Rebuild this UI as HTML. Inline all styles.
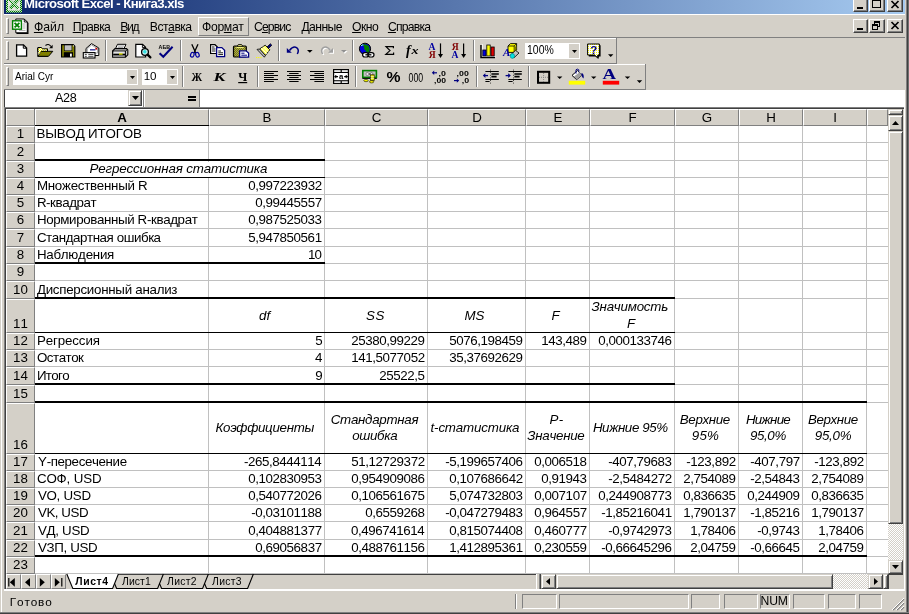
<!DOCTYPE html><html lang="ru"><head><meta charset="utf-8"><title>Microsoft Excel - Книга3.xls</title>
<style>
html,body{margin:0;padding:0;}
body{width:909px;height:614px;overflow:hidden;background:#d4d0c8;position:relative;
 font-family:"Liberation Sans",sans-serif;font-size:13.33px;color:#000;font-kerning:none;font-variant-ligatures:none;}
div{position:absolute;box-sizing:border-box;white-space:nowrap;}
svg{position:absolute;overflow:visible;}
.t{line-height:16px;height:16px;}
.ui{font-size:12.6px;line-height:16px;height:16px;}
.c{line-height:17px;height:17px;}
.r{text-align:right;}
.ctr{text-align:center;}
.i{font-style:italic;}
.b{font-weight:bold;}
.hl{background:#c0c0c0;height:1px;}
.vl{background:#c0c0c0;width:1px;}
.hdr{background:#d4d0c8;border-right:1px solid #808080;border-bottom:1px solid #808080;border-top:1px solid #fff;border-left:1px solid #fff;text-align:center;}
.btn{background:#d4d0c8;border:1px solid;border-color:#d4d0c8 #404040 #404040 #d4d0c8;box-shadow:inset 1px 1px 0 #fff,inset -1px -1px 0 #808080;}
.cb{background:#d4d0c8;border:1px solid;border-color:#fff #404040 #404040 #fff;box-shadow:inset -1px -1px 0 #808080;}
.sunk{border-top:1px solid #808080;border-left:1px solid #808080;border-right:1px solid #fff;border-bottom:1px solid #fff;}
.sep{width:2px;border-left:1px solid #808080;border-right:1px solid #fff;}
.grip{width:3px;border-left:1px solid #fff;border-right:1px solid #808080;border-top:1px solid #fff;border-bottom:1px solid #808080;}
.dither{background-image:conic-gradient(#fff 25%,#d4d0c8 0 50%,#fff 0 75%,#d4d0c8 0);background-size:2px 2px;}
</style></head><body><div id="w" style="left:0;top:0;width:909px;height:614px;will-change:transform;">
<div style="left:4px;top:0px;width:901px;height:14px;background:linear-gradient(to right,#0a246a 0%,#a6caf0 100%);"></div>
<div class="t" style="left:24.12px;top:-3.57px;font-size:13.2px;letter-spacing:-0.563px;font-weight:bold;color:#fff;">Microsoft Excel - Книга3.xls</div>
<svg style="left:0;top:0" width="30" height="14" viewBox="0 0 30 14"><defs><pattern id="dg" width="2" height="2" patternUnits="userSpaceOnUse"><rect width="2" height="2" fill="#008000"/><rect width="1" height="1" fill="#c0dcc0"/><rect x="1" y="1" width="1" height="1" fill="#c0dcc0"/></pattern></defs><rect x="6" y="-3" width="16" height="15.6" fill="url(#dg)"/><rect x="8" y="-3" width="12" height="13.6" fill="#e8e8e4"/><path d="M9.5 -1 L18 8.5 M18.5 -1 L10 8.5" stroke="url(#dg)" stroke-width="3.2"/><path d="M10 -1 L18.5 8.5" stroke="#fff" stroke-width="0.8"/></svg>
<div style="left:0;top:0;width:909px;height:12px;overflow:hidden;">
<div class="cb" style="left:853px;top:-3px;width:15px;height:15px;"></div>
<div style="left:857px;top:7px;width:6px;height:2px;background:#000;"></div>
<div class="cb" style="left:869px;top:-3px;width:16px;height:15px;"></div>
<div style="left:872px;top:-1px;width:9px;height:9px;border:1px solid #000;border-top:2px solid #000;"></div>
<div class="cb" style="left:887px;top:-3px;width:16px;height:15px;"></div>
<svg style="left:887px;top:-3px" width="16" height="15"><path d="M4.5 4 L11.5 11 M11.5 4 L4.5 11" stroke="#000" stroke-width="1.7" fill="none"/></svg>
</div>
<div style="left:4px;top:14px;width:901px;height:1px;background:#fff;"></div>
<div style="left:4px;top:37px;width:901px;height:1px;background:#808080;"></div>
<div style="left:4px;top:38px;width:612px;height:1px;background:#fff;"></div>
<div class="grip" style="left:6px;top:18px;width:3px;height:16px;"></div>
<svg style="left:0;top:0" width="40" height="40" viewBox="0 0 40 40"><path d="M16.5 20 H25.5 L28.5 23 V34 H16.5 Z" fill="#000"/><path d="M15.8 19 H24.3 L27.3 22 V32.8 H15.8 Z" fill="#fff" stroke="#000" stroke-width="1"/><path d="M24.3 19 V22 H27.3" fill="none" stroke="#000" stroke-width="0.9"/><path d="M22.5 24 H25.5 M22.5 26 H25.5 M22.5 28 H25.5 M19 30.4 H25.5" stroke="#a0a0a0" stroke-width="0.9"/><rect x="12.6" y="20.8" width="8.8" height="8.4" fill="#fff" stroke="#008000" stroke-width="1.4"/><path d="M14.6 22.8 L19.4 27.4 M19.4 22.8 L14.6 27.4" stroke="#008000" stroke-width="1.8"/></svg>
<div style="left:198px;top:17px;width:51px;height:19px;border-top:1px solid #fff;border-left:1px solid #fff;border-right:1px solid #808080;border-bottom:1px solid #808080;"></div>
<div class="t" style="left:33.90px;top:18.77px;font-size:12.2px;letter-spacing:0.085px;"><u>Ф</u>айл</div>
<div class="t" style="left:72.71px;top:18.77px;font-size:12.2px;letter-spacing:-0.571px;"><u>П</u>равка</div>
<div class="t" style="left:120.20px;top:18.77px;font-size:12.2px;letter-spacing:-1.331px;"><u>В</u>ид</div>
<div class="t" style="left:149.80px;top:18.77px;font-size:12.2px;letter-spacing:-0.502px;">Вст<u>а</u>вка</div>
<div class="t" style="left:202.10px;top:18.77px;font-size:12.2px;letter-spacing:-0.359px;">Фор<u>м</u>ат</div>
<div class="t" style="left:254.08px;top:18.77px;font-size:12.2px;letter-spacing:-0.907px;">С<u>е</u>рвис</div>
<div class="t" style="left:301.41px;top:18.77px;font-size:12.2px;letter-spacing:-0.589px;"><u>Д</u>анные</div>
<div class="t" style="left:352.12px;top:18.77px;font-size:12.2px;letter-spacing:-0.553px;"><u>О</u>кно</div>
<div class="t" style="left:387.88px;top:18.77px;font-size:12.2px;letter-spacing:-0.745px;"><u>С</u>правка</div>
<div class="cb" style="left:853px;top:19px;width:15px;height:14px;"></div>
<div style="left:857px;top:28px;width:6px;height:2px;background:#000;"></div>
<div class="cb" style="left:869px;top:19px;width:16px;height:14px;"></div>
<div style="left:874px;top:21px;width:6px;height:6px;border:1px solid #000;border-top:2px solid #000;"></div>
<div style="left:872px;top:24px;width:6px;height:6px;border:1px solid #000;border-top:2px solid #000;background:#d4d0c8;"></div>
<div class="cb" style="left:887px;top:19px;width:16px;height:14px;"></div>
<svg style="left:887px;top:19px" width="16" height="14"><path d="M4.5 3 L11.5 10 M11.5 3 L4.5 10" stroke="#000" stroke-width="1.7" fill="none"/></svg>
<div style="left:4px;top:63px;width:613px;height:1px;background:#808080;"></div>
<div style="left:4px;top:64px;width:642px;height:1px;background:#fff;"></div>
<div style="left:616px;top:38px;width:1px;height:26px;background:#808080;"></div>
<div class="grip" style="left:6px;top:41px;width:3px;height:19px;"></div>
<div class="sep" style="left:105px;top:40px;width:2px;height:21px;"></div>
<div class="sep" style="left:180px;top:40px;width:2px;height:21px;"></div>
<div class="sep" style="left:278px;top:40px;width:2px;height:21px;"></div>
<div class="sep" style="left:352px;top:40px;width:2px;height:21px;"></div>
<div class="sep" style="left:473px;top:40px;width:2px;height:21px;"></div>
<div style="left:525px;top:43px;width:55px;height:16px;background:#fff;"></div>
<div style="left:569px;top:44px;width:10px;height:14px;background:#d4d0c8;"></div>
<div class="t" style="left:526.80px;top:41.50px;font-size:12.4px;letter-spacing:0.000px;transform:scaleX(0.8441);transform-origin:0 0;">100%</div>
<div style="left:4px;top:89px;width:642px;height:1px;background:#808080;"></div>
<div style="left:645px;top:64px;width:1px;height:26px;background:#808080;"></div>
<div class="grip" style="left:6px;top:67px;width:3px;height:19px;"></div>
<div class="sep" style="left:182px;top:66px;width:2px;height:21px;"></div>
<div class="sep" style="left:257px;top:66px;width:2px;height:21px;"></div>
<div class="sep" style="left:355px;top:66px;width:2px;height:21px;"></div>
<div class="sep" style="left:476px;top:66px;width:2px;height:21px;"></div>
<div class="sep" style="left:528px;top:66px;width:2px;height:21px;"></div>
<div style="left:13px;top:69px;width:125px;height:16px;background:#fff;"></div>
<div class="t" style="left:14.88px;top:67.61px;font-size:11.8px;letter-spacing:0.000px;transform:scaleX(0.8486);transform-origin:0 0;">Arial Cyr</div>
<div style="left:127px;top:70px;width:10px;height:14px;background:#d4d0c8;"></div>
<div style="left:142px;top:69px;width:36px;height:16px;background:#fff;"></div>
<div class="t" style="left:143.82px;top:67.68px;font-size:11.6px;letter-spacing:-0.166px;">10</div>
<div style="left:167px;top:70px;width:10px;height:14px;background:#d4d0c8;"></div>
<svg style="left:129.5px;top:76px" width="5" height="3"><path d="M0 0 H5 L2.5 3 Z" fill="#000"/></svg>
<svg style="left:169.5px;top:76px" width="5" height="3"><path d="M0 0 H5 L2.5 3 Z" fill="#000"/></svg>
<svg style="left:571.5px;top:50px" width="5" height="3"><path d="M0 0 H5 L2.5 3 Z" fill="#000"/></svg>
<div style="left:4px;top:90px;width:1px;height:17px;background:#404040;"></div>
<div style="left:5px;top:90px;width:138px;height:17px;background:#fff;"></div>
<div class="t" style="left:54.98px;top:90.13px;font-size:12.6px;letter-spacing:-0.323px;">A28</div>
<div class="btn" style="left:128px;top:90px;width:14px;height:16px;"></div>
<svg style="left:131.5px;top:96px" width="7" height="4"><path d="M0 0 H7 L3.5 4 Z" fill="#000"/></svg>
<div style="left:143px;top:90px;width:57px;height:17px;border-left:1px solid #808080;border-right:1px solid #808080;box-shadow:inset 1px 0 0 #fff;"></div>
<div style="left:187.5px;top:96px;width:8px;height:1.5px;background:#000;"></div>
<div style="left:187.5px;top:99px;width:8px;height:1.5px;background:#000;"></div>
<div style="left:200px;top:90px;width:705px;height:17px;background:#fff;"></div>
<div style="left:4px;top:107px;width:901px;height:1px;background:#808080;"></div>
<div style="left:4px;top:107px;width:1px;height:484px;background:#808080;"></div>
<div style="left:5px;top:108px;width:900px;height:1px;background:#404040;"></div>
<div style="left:5px;top:108px;width:1px;height:482px;background:#404040;"></div>
<div style="left:6px;top:109px;width:882px;height:465px;background:#fff;"></div>
<div class="vl" style="left:208px;top:126px;width:1px;height:448px;"></div>
<div class="vl" style="left:324px;top:126px;width:1px;height:448px;"></div>
<div class="vl" style="left:427px;top:126px;width:1px;height:448px;"></div>
<div class="vl" style="left:525px;top:126px;width:1px;height:448px;"></div>
<div class="vl" style="left:589px;top:126px;width:1px;height:448px;"></div>
<div class="vl" style="left:674px;top:126px;width:1px;height:448px;"></div>
<div class="vl" style="left:738px;top:126px;width:1px;height:448px;"></div>
<div class="vl" style="left:802px;top:126px;width:1px;height:448px;"></div>
<div class="vl" style="left:866px;top:126px;width:1px;height:448px;"></div>
<div class="hl" style="left:35px;top:142px;width:853px;height:1px;"></div>
<div class="hl" style="left:35px;top:160px;width:853px;height:1px;"></div>
<div class="hl" style="left:35px;top:177px;width:853px;height:1px;"></div>
<div class="hl" style="left:35px;top:194px;width:853px;height:1px;"></div>
<div class="hl" style="left:35px;top:211px;width:853px;height:1px;"></div>
<div class="hl" style="left:35px;top:228px;width:853px;height:1px;"></div>
<div class="hl" style="left:35px;top:246px;width:853px;height:1px;"></div>
<div class="hl" style="left:35px;top:263px;width:853px;height:1px;"></div>
<div class="hl" style="left:35px;top:280px;width:853px;height:1px;"></div>
<div class="hl" style="left:35px;top:298px;width:853px;height:1px;"></div>
<div class="hl" style="left:35px;top:332px;width:853px;height:1px;"></div>
<div class="hl" style="left:35px;top:349px;width:853px;height:1px;"></div>
<div class="hl" style="left:35px;top:366px;width:853px;height:1px;"></div>
<div class="hl" style="left:35px;top:384px;width:853px;height:1px;"></div>
<div class="hl" style="left:35px;top:402px;width:853px;height:1px;"></div>
<div class="hl" style="left:35px;top:453px;width:853px;height:1px;"></div>
<div class="hl" style="left:35px;top:470px;width:853px;height:1px;"></div>
<div class="hl" style="left:35px;top:487px;width:853px;height:1px;"></div>
<div class="hl" style="left:35px;top:504px;width:853px;height:1px;"></div>
<div class="hl" style="left:35px;top:521px;width:853px;height:1px;"></div>
<div class="hl" style="left:35px;top:539px;width:853px;height:1px;"></div>
<div class="hl" style="left:35px;top:556px;width:853px;height:1px;"></div>
<div class="hl" style="left:35px;top:573px;width:853px;height:1px;"></div>
<div style="left:208px;top:162px;width:1px;height:15px;background:#fff;"></div>
<div class="hdr" style="left:6px;top:109px;width:29px;height:17px;"></div>
<div class="hdr" style="left:35px;top:109px;width:174px;height:17px;font-weight:bold;line-height:15px;">A</div>
<div class="hdr" style="left:209px;top:109px;width:116px;height:17px;line-height:15px;">B</div>
<div class="hdr" style="left:325px;top:109px;width:103px;height:17px;line-height:15px;">C</div>
<div class="hdr" style="left:428px;top:109px;width:98px;height:17px;line-height:15px;">D</div>
<div class="hdr" style="left:526px;top:109px;width:64px;height:17px;line-height:15px;">E</div>
<div class="hdr" style="left:590px;top:109px;width:85px;height:17px;line-height:15px;">F</div>
<div class="hdr" style="left:675px;top:109px;width:64px;height:17px;line-height:15px;">G</div>
<div class="hdr" style="left:739px;top:109px;width:64px;height:17px;line-height:15px;">H</div>
<div class="hdr" style="left:803px;top:109px;width:64px;height:17px;line-height:15px;">I</div>
<div class="hdr" style="left:867px;top:109px;width:21px;height:17px;"></div>
<div style="left:35px;top:125px;width:174px;height:1px;background:#000;"></div>
<div style="left:34px;top:109px;width:1px;height:17px;background:#808080;"></div>
<div class="hdr" style="left:6px;top:126px;width:29px;height:17px;"><div style="left:0;right:0;bottom:0.4px;height:17px;line-height:17px;text-align:center;">1</div></div>
<div class="hdr" style="left:6px;top:143px;width:29px;height:18px;"><div style="left:0;right:0;bottom:0.4px;height:17px;line-height:17px;text-align:center;">2</div></div>
<div class="hdr" style="left:6px;top:161px;width:29px;height:17px;"><div style="left:0;right:0;bottom:0.4px;height:17px;line-height:17px;text-align:center;">3</div></div>
<div class="hdr" style="left:6px;top:178px;width:29px;height:17px;"><div style="left:0;right:0;bottom:0.4px;height:17px;line-height:17px;text-align:center;">4</div></div>
<div class="hdr" style="left:6px;top:195px;width:29px;height:17px;"><div style="left:0;right:0;bottom:0.4px;height:17px;line-height:17px;text-align:center;">5</div></div>
<div class="hdr" style="left:6px;top:212px;width:29px;height:17px;"><div style="left:0;right:0;bottom:0.4px;height:17px;line-height:17px;text-align:center;">6</div></div>
<div class="hdr" style="left:6px;top:229px;width:29px;height:18px;"><div style="left:0;right:0;bottom:0.4px;height:17px;line-height:17px;text-align:center;">7</div></div>
<div class="hdr" style="left:6px;top:247px;width:29px;height:17px;"><div style="left:0;right:0;bottom:0.4px;height:17px;line-height:17px;text-align:center;">8</div></div>
<div class="hdr" style="left:6px;top:264px;width:29px;height:17px;"><div style="left:0;right:0;bottom:0.4px;height:17px;line-height:17px;text-align:center;">9</div></div>
<div class="hdr" style="left:6px;top:281px;width:29px;height:18px;"><div style="left:0;right:0;bottom:0.4px;height:17px;line-height:17px;text-align:center;">10</div></div>
<div class="hdr" style="left:6px;top:299px;width:29px;height:34px;"><div style="left:0;right:0;bottom:0.4px;height:17px;line-height:17px;text-align:center;">11</div></div>
<div class="hdr" style="left:6px;top:333px;width:29px;height:17px;"><div style="left:0;right:0;bottom:0.4px;height:17px;line-height:17px;text-align:center;">12</div></div>
<div class="hdr" style="left:6px;top:350px;width:29px;height:17px;"><div style="left:0;right:0;bottom:0.4px;height:17px;line-height:17px;text-align:center;">13</div></div>
<div class="hdr" style="left:6px;top:367px;width:29px;height:18px;"><div style="left:0;right:0;bottom:0.4px;height:17px;line-height:17px;text-align:center;">14</div></div>
<div class="hdr" style="left:6px;top:385px;width:29px;height:18px;"><div style="left:0;right:0;bottom:0.4px;height:17px;line-height:17px;text-align:center;">15</div></div>
<div class="hdr" style="left:6px;top:403px;width:29px;height:51px;"><div style="left:0;right:0;bottom:0.4px;height:17px;line-height:17px;text-align:center;">16</div></div>
<div class="hdr" style="left:6px;top:454px;width:29px;height:17px;"><div style="left:0;right:0;bottom:0.4px;height:17px;line-height:17px;text-align:center;">17</div></div>
<div class="hdr" style="left:6px;top:471px;width:29px;height:17px;"><div style="left:0;right:0;bottom:0.4px;height:17px;line-height:17px;text-align:center;">18</div></div>
<div class="hdr" style="left:6px;top:488px;width:29px;height:17px;"><div style="left:0;right:0;bottom:0.4px;height:17px;line-height:17px;text-align:center;">19</div></div>
<div class="hdr" style="left:6px;top:505px;width:29px;height:17px;"><div style="left:0;right:0;bottom:0.4px;height:17px;line-height:17px;text-align:center;">20</div></div>
<div class="hdr" style="left:6px;top:522px;width:29px;height:18px;"><div style="left:0;right:0;bottom:0.4px;height:17px;line-height:17px;text-align:center;">21</div></div>
<div class="hdr" style="left:6px;top:540px;width:29px;height:17px;"><div style="left:0;right:0;bottom:0.4px;height:17px;line-height:17px;text-align:center;">22</div></div>
<div class="hdr" style="left:6px;top:557px;width:29px;height:17px;"><div style="left:0;right:0;bottom:0.4px;height:17px;line-height:17px;text-align:center;">23</div></div>
<div class="c" style="left:36.51px;top:124.98px;letter-spacing:-0.178px;">ВЫВОД ИТОГОВ</div>
<div class="c" style="left:89.59px;top:159.98px;letter-spacing:-0.152px;font-style:italic;">Регрессионная статистика</div>
<div class="c" style="left:36.91px;top:176.98px;letter-spacing:-0.267px;">Множественный R</div>
<div class="c" style="left:248.27px;top:176.98px;letter-spacing:-0.404px;">0,997223932</div>
<div class="c" style="left:36.91px;top:193.98px;letter-spacing:-0.423px;">R-квадрат</div>
<div class="c" style="left:255.27px;top:193.98px;letter-spacing:-0.403px;">0,99445557</div>
<div class="c" style="left:36.91px;top:210.98px;letter-spacing:-0.365px;">Нормированный R-квадрат</div>
<div class="c" style="left:248.19px;top:210.98px;letter-spacing:-0.404px;">0,987525033</div>
<div class="c" style="left:36.92px;top:228.98px;letter-spacing:-0.428px;">Стандартная ошибка</div>
<div class="c" style="left:248.25px;top:228.98px;letter-spacing:-0.404px;">5,947850561</div>
<div class="c" style="left:36.91px;top:245.98px;letter-spacing:-0.250px;">Наблюдения</div>
<div class="c" style="left:308.12px;top:245.98px;letter-spacing:-1.027px;">10</div>
<div class="c" style="left:36.90px;top:280.98px;letter-spacing:-0.268px;">Дисперсионный анализ</div>
<div class="c" style="left:259.05px;top:306.58px;letter-spacing:-0.020px;font-style:italic;">df</div>
<div class="c" style="left:365.92px;top:306.58px;letter-spacing:0.739px;font-style:italic;">SS</div>
<div class="c" style="left:464.59px;top:306.58px;letter-spacing:-0.142px;font-style:italic;">MS</div>
<div class="c" style="left:551.59px;top:306.58px;letter-spacing:0.000px;font-style:italic;">F</div>
<div class="c" style="left:591.58px;top:298.18px;letter-spacing:-0.219px;font-style:italic;">Значимость</div>
<div class="c" style="left:626.89px;top:314.58px;letter-spacing:0.000px;font-style:italic;">F</div>
<div class="c" style="left:36.91px;top:331.98px;letter-spacing:-0.121px;">Регрессия</div>
<div class="c" style="left:315.16px;top:331.98px;letter-spacing:0.000px;">5</div>
<div class="c" style="left:351.23px;top:331.98px;letter-spacing:-0.404px;">25380,99229</div>
<div class="c" style="left:449.23px;top:331.98px;letter-spacing:-0.404px;">5076,198459</div>
<div class="c" style="left:541.23px;top:331.98px;letter-spacing:-0.397px;">143,489</div>
<div class="c" style="left:598.19px;top:331.98px;letter-spacing:-0.404px;">0,000133746</div>
<div class="c" style="left:36.97px;top:348.98px;letter-spacing:-0.489px;">Остаток</div>
<div class="c" style="left:314.99px;top:348.98px;letter-spacing:0.000px;">4</div>
<div class="c" style="left:351.27px;top:348.98px;letter-spacing:-0.404px;">141,5077052</div>
<div class="c" style="left:449.23px;top:348.98px;letter-spacing:-0.404px;">35,37692629</div>
<div class="c" style="left:36.91px;top:366.98px;letter-spacing:-0.681px;">Итого</div>
<div class="c" style="left:315.23px;top:366.98px;letter-spacing:0.000px;">9</div>
<div class="c" style="left:379.16px;top:366.98px;letter-spacing:-0.397px;">25522,5</div>
<div class="c" style="left:215.49px;top:419.18px;letter-spacing:-0.312px;font-style:italic;">Коэффициенты</div>
<div class="c" style="left:330.76px;top:410.78px;letter-spacing:-0.285px;font-style:italic;">Стандартная</div>
<div class="c" style="left:352.16px;top:427.18px;letter-spacing:-0.321px;font-style:italic;">ошибка</div>
<div class="c" style="left:430.59px;top:419.18px;letter-spacing:-0.170px;font-style:italic;">t-статистика</div>
<div class="c" style="left:549.39px;top:410.78px;letter-spacing:0.579px;font-style:italic;">P-</div>
<div class="c" style="left:527.28px;top:427.18px;letter-spacing:-0.270px;font-style:italic;">Значение</div>
<div class="c" style="left:592.89px;top:419.18px;letter-spacing:-0.386px;font-style:italic;">Нижние 95%</div>
<div class="c" style="left:679.79px;top:410.78px;letter-spacing:-0.340px;font-style:italic;">Верхние</div>
<div class="c" style="left:691.84px;top:427.18px;letter-spacing:0.224px;font-style:italic;">95%</div>
<div class="c" style="left:745.89px;top:410.78px;letter-spacing:-0.694px;font-style:italic;">Нижние</div>
<div class="c" style="left:749.94px;top:427.18px;letter-spacing:-0.367px;font-style:italic;">95,0%</div>
<div class="c" style="left:808.09px;top:410.78px;letter-spacing:-0.423px;font-style:italic;">Верхние</div>
<div class="c" style="left:814.84px;top:427.18px;letter-spacing:-0.267px;font-style:italic;">95,0%</div>
<div class="c" style="left:38.11px;top:452.98px;letter-spacing:-0.372px;">Y-пересечение</div>
<div class="c" style="left:243.99px;top:452.98px;letter-spacing:-0.407px;">-265,8444114</div>
<div class="c" style="left:351.27px;top:452.98px;letter-spacing:-0.404px;">51,12729372</div>
<div class="c" style="left:445.19px;top:452.98px;letter-spacing:-0.407px;">-5,199657406</div>
<div class="c" style="left:534.18px;top:452.98px;letter-spacing:-0.400px;">0,006518</div>
<div class="c" style="left:608.19px;top:452.98px;letter-spacing:-0.406px;">-407,79683</div>
<div class="c" style="left:686.27px;top:452.98px;letter-spacing:-0.403px;">-123,892</div>
<div class="c" style="left:750.27px;top:452.98px;letter-spacing:-0.403px;">-407,797</div>
<div class="c" style="left:814.27px;top:452.98px;letter-spacing:-0.403px;">-123,892</div>
<div class="c" style="left:36.92px;top:469.98px;letter-spacing:-0.138px;">СОФ, USD</div>
<div class="c" style="left:248.19px;top:469.98px;letter-spacing:-0.404px;">0,102830953</div>
<div class="c" style="left:351.19px;top:469.98px;letter-spacing:-0.404px;">0,954909086</div>
<div class="c" style="left:449.27px;top:469.98px;letter-spacing:-0.404px;">0,107686642</div>
<div class="c" style="left:541.19px;top:469.98px;letter-spacing:-0.397px;">0,91943</div>
<div class="c" style="left:608.27px;top:469.98px;letter-spacing:-0.406px;">-2,5484272</div>
<div class="c" style="left:683.23px;top:469.98px;letter-spacing:-0.400px;">2,754089</div>
<div class="c" style="left:750.19px;top:469.98px;letter-spacing:-0.403px;">-2,54843</div>
<div class="c" style="left:811.23px;top:469.98px;letter-spacing:-0.400px;">2,754089</div>
<div class="c" style="left:37.94px;top:486.98px;letter-spacing:-0.286px;">VO, USD</div>
<div class="c" style="left:248.19px;top:486.98px;letter-spacing:-0.404px;">0,540772026</div>
<div class="c" style="left:351.16px;top:486.98px;letter-spacing:-0.404px;">0,106561675</div>
<div class="c" style="left:449.19px;top:486.98px;letter-spacing:-0.404px;">5,074732803</div>
<div class="c" style="left:534.27px;top:486.98px;letter-spacing:-0.400px;">0,007107</div>
<div class="c" style="left:598.19px;top:486.98px;letter-spacing:-0.404px;">0,244908773</div>
<div class="c" style="left:683.16px;top:486.98px;letter-spacing:-0.400px;">0,836635</div>
<div class="c" style="left:747.23px;top:486.98px;letter-spacing:-0.400px;">0,244909</div>
<div class="c" style="left:811.16px;top:486.98px;letter-spacing:-0.400px;">0,836635</div>
<div class="c" style="left:37.94px;top:503.98px;letter-spacing:-0.439px;">VK, USD</div>
<div class="c" style="left:251.18px;top:503.98px;letter-spacing:-0.406px;">-0,03101188</div>
<div class="c" style="left:365.18px;top:503.98px;letter-spacing:-0.401px;">0,6559268</div>
<div class="c" style="left:445.19px;top:503.98px;letter-spacing:-0.407px;">-0,047279483</div>
<div class="c" style="left:534.27px;top:503.98px;letter-spacing:-0.400px;">0,964557</div>
<div class="c" style="left:601.25px;top:503.98px;letter-spacing:-0.406px;">-1,85216041</div>
<div class="c" style="left:683.27px;top:503.98px;letter-spacing:-0.400px;">1,790137</div>
<div class="c" style="left:750.19px;top:503.98px;letter-spacing:-0.403px;">-1,85216</div>
<div class="c" style="left:811.27px;top:503.98px;letter-spacing:-0.400px;">1,790137</div>
<div class="c" style="left:37.94px;top:521.98px;letter-spacing:-0.296px;">VД, USD</div>
<div class="c" style="left:248.27px;top:521.98px;letter-spacing:-0.404px;">0,404881377</div>
<div class="c" style="left:350.99px;top:521.98px;letter-spacing:-0.404px;">0,496741614</div>
<div class="c" style="left:449.18px;top:521.98px;letter-spacing:-0.404px;">0,815074408</div>
<div class="c" style="left:534.27px;top:521.98px;letter-spacing:-0.400px;">0,460777</div>
<div class="c" style="left:608.19px;top:521.98px;letter-spacing:-0.406px;">-0,9742973</div>
<div class="c" style="left:690.19px;top:521.98px;letter-spacing:-0.397px;">1,78406</div>
<div class="c" style="left:757.19px;top:521.98px;letter-spacing:-0.402px;">-0,9743</div>
<div class="c" style="left:818.19px;top:521.98px;letter-spacing:-0.397px;">1,78406</div>
<div class="c" style="left:37.94px;top:538.98px;letter-spacing:-0.340px;">VЗП, USD</div>
<div class="c" style="left:255.27px;top:538.98px;letter-spacing:-0.403px;">0,69056837</div>
<div class="c" style="left:351.19px;top:538.98px;letter-spacing:-0.404px;">0,488761156</div>
<div class="c" style="left:449.25px;top:538.98px;letter-spacing:-0.404px;">1,412895361</div>
<div class="c" style="left:534.23px;top:538.98px;letter-spacing:-0.400px;">0,230559</div>
<div class="c" style="left:601.19px;top:538.98px;letter-spacing:-0.406px;">-0,66645296</div>
<div class="c" style="left:690.23px;top:538.98px;letter-spacing:-0.397px;">2,04759</div>
<div class="c" style="left:750.16px;top:538.98px;letter-spacing:-0.403px;">-0,66645</div>
<div class="c" style="left:818.23px;top:538.98px;letter-spacing:-0.397px;">2,04759</div>
<div style="left:35px;top:159px;width:290px;height:2px;background:#000;"></div>
<div style="left:35px;top:177px;width:290px;height:1px;background:#000;"></div>
<div style="left:35px;top:262px;width:290px;height:2px;background:#000;"></div>
<div style="left:35px;top:297px;width:640px;height:2px;background:#000;"></div>
<div style="left:35px;top:332px;width:640px;height:1px;background:#000;"></div>
<div style="left:35px;top:383px;width:640px;height:2px;background:#000;"></div>
<div style="left:35px;top:401px;width:832px;height:2px;background:#000;"></div>
<div style="left:35px;top:453px;width:832px;height:1px;background:#000;"></div>
<div style="left:35px;top:555px;width:832px;height:2px;background:#000;"></div>
<div class="dither" style="left:888px;top:109px;width:15px;height:465px;"></div>
<div class="btn" style="left:888px;top:109px;width:15px;height:6px;"></div>
<div class="btn" style="left:888px;top:115px;width:15px;height:16px;"></div>
<svg style="left:892px;top:121px" width="7" height="4"><path d="M0 4 H7 L3.5 0 Z" fill="#000"/></svg>
<div class="btn" style="left:888px;top:131px;width:15px;height:393px;"></div>
<div class="btn" style="left:888px;top:560px;width:15px;height:14px;"></div>
<svg style="left:892px;top:565px" width="7" height="4"><path d="M0 0 H7 L3.5 4 Z" fill="#000"/></svg>
<div style="left:904px;top:107px;width:1px;height:484px;background:#fff;"></div>
<div style="left:6px;top:574px;width:530px;height:15px;background:#d4d0c8;"></div>
<div style="left:118px;top:574px;width:418px;height:1px;background:#404040;"></div>
<div style="left:6px;top:574px;width:15px;height:15px;background:#d4d0c8;border:1px solid;border-color:#fff #808080 #808080 #fff;"></div>
<div style="left:21px;top:574px;width:15px;height:15px;background:#d4d0c8;border:1px solid;border-color:#fff #808080 #808080 #fff;"></div>
<div style="left:36px;top:574px;width:15px;height:15px;background:#d4d0c8;border:1px solid;border-color:#fff #808080 #808080 #fff;"></div>
<div style="left:51px;top:574px;width:15px;height:15px;background:#d4d0c8;border:1px solid;border-color:#fff #808080 #808080 #fff;"></div>
<svg style="left:6px;top:574px" width="60" height="15"><path d="M2.8 4 V12.6" stroke="#000" stroke-width="1.2"/><path d="M8.8 3.9 V12.7 L3.8 8.3 Z" fill="#000"/><path d="M24 3.9 V12.7 L19 8.3 Z" fill="#000"/><path d="M33.8 3.9 V12.7 L38.8 8.3 Z" fill="#000"/><path d="M48.8 3.9 V12.7 L53.8 8.3 Z" fill="#000"/><path d="M55.8 4 V12.6" stroke="#000" stroke-width="1.2"/></svg>
<svg style="left:0;top:0" width="300" height="600"><path d="M66.8 574 L72.8 588.5 H112.6 L118.4 574 Z" fill="#fff"/><path d="M66.8 574 L72.8 588.5 H112.6 L118.4 574" fill="none" stroke="#000" stroke-width="1.1"/><path d="M114.6 583.6 L116.6 588.5 H157.6 L163.4 574 M159.6 583.6 L161.6 588.5 H202.6 L208.4 574 M204.6 583.6 L206.6 588.5 H247.6 L253.4 574 " fill="none" stroke="#000" stroke-width="1.1"/></svg>
<div class="t" style="left:75.36px;top:573.60px;font-size:10.4px;letter-spacing:0.561px;font-weight:bold;">Лист4</div>
<div class="t" style="left:122.11px;top:573.60px;font-size:10.4px;letter-spacing:0.054px;">Лист1</div>
<div class="t" style="left:167.11px;top:573.60px;font-size:10.4px;letter-spacing:0.258px;">Лист2</div>
<div class="t" style="left:212.11px;top:573.60px;font-size:10.4px;letter-spacing:0.242px;">Лист3</div>
<div style="left:536px;top:574px;width:5px;height:15px;border-left:1px solid #fff;border-right:1px solid #404040;box-shadow:inset -1px 0 0 #808080;"></div>
<div class="dither" style="left:541px;top:574px;width:347px;height:15px;"></div>
<div class="btn" style="left:541px;top:574px;width:15px;height:15px;"></div>
<svg style="left:546px;top:578px" width="4" height="7"><path d="M4 0 V7 L0 3.5 Z" fill="#000"/></svg>
<div class="btn" style="left:556px;top:574px;width:277px;height:15px;"></div>
<div class="btn" style="left:868px;top:574px;width:15px;height:15px;"></div>
<svg style="left:874px;top:578px" width="4" height="7"><path d="M0 0 V7 L4 3.5 Z" fill="#000"/></svg>
<div class="btn" style="left:883px;top:574px;width:5px;height:15px;"></div>
<div style="left:888px;top:574px;width:15px;height:15px;background:#d4d0c8;border-left:1px solid #404040;border-top:1px solid #404040;"></div>
<div style="left:4px;top:589.4px;width:901px;height:1.6px;background:#fff;"></div>
<div class="t" style="left:9.73px;top:593.71px;font-size:11.8px;letter-spacing:0.863px;">Готово</div>
<div class="sep" style="left:515px;top:594px;width:2px;height:15px;"></div>
<div class="sunk" style="left:522px;top:594px;width:34.5px;height:15px;"></div>
<div class="sunk" style="left:559px;top:594px;width:130px;height:15px;"></div>
<div class="sunk" style="left:691px;top:594px;width:29px;height:15px;"></div>
<div class="sunk" style="left:724px;top:594px;width:33.5px;height:15px;"></div>
<div class="sunk" style="left:760px;top:594px;width:30px;height:15px;"></div>
<div class="sunk" style="left:793px;top:594px;width:32px;height:15px;"></div>
<div class="sunk" style="left:828px;top:594px;width:28px;height:15px;"></div>
<div class="sunk" style="left:859px;top:594px;width:23px;height:15px;"></div>
<div class="t" style="left:760.50px;top:593.47px;font-size:12.2px;letter-spacing:-0.141px;">NUM</div>
<svg style="left:892px;top:598px" width="13" height="13"><path d="M12 1 L1 12 M12 5 L5 12 M12 9 L9 12" stroke="#808080" stroke-width="1.3"/><path d="M12 0 L0 12 M12 4 L4 12 M12 8 L8 12" stroke="#fff" stroke-width="1"/></svg>
<div style="left:1px;top:0px;width:1px;height:612px;background:#fff;"></div>
<div style="left:905px;top:0px;width:1px;height:614px;background:#d4d0c8;"></div>
<div style="left:906px;top:0px;width:1px;height:614px;background:#808080;"></div>
<div style="left:907px;top:0px;width:1px;height:614px;background:#404040;"></div>
<div style="left:908px;top:0px;width:1px;height:614px;background:#707070;"></div>
<div style="left:0px;top:612px;width:909px;height:1px;background:#808080;"></div>
<div style="left:0px;top:613px;width:909px;height:1px;background:#404040;"></div>
<svg style="left:0;top:0" width="909" height="92" viewBox="0 0 909 92" font-family="Liberation Sans, sans-serif" style="font-kerning:none">
<defs>
<pattern id="dy" width="2" height="2" patternUnits="userSpaceOnUse"><rect width="2" height="2" fill="#ffff00"/><rect width="1" height="1" fill="#fff"/><rect x="1" y="1" width="1" height="1" fill="#fff"/></pattern>
<pattern id="do" width="2" height="2" patternUnits="userSpaceOnUse"><rect width="2" height="2" fill="#808000"/><rect width="1" height="1" fill="#a0a060"/><rect x="1" y="1" width="1" height="1" fill="#a0a060"/></pattern>
<pattern id="dh" width="2" height="2" patternUnits="userSpaceOnUse"><rect width="2" height="2" fill="#fff"/><rect width="1" height="1" fill="#ffff00"/></pattern>
</defs>
<!-- ===== Toolbar 1 ===== -->
<!-- New -->
<path d="M16.6 44.8 H23.5 L26.6 48 V56.2 H16.6 Z" fill="#fff" stroke="#000" stroke-width="1.3"/>
<path d="M23.3 44.8 V48.2 H26.6" fill="none" stroke="#000" stroke-width="1"/>
<!-- Open -->
<path d="M37.8 47.5 H41.5 L42.5 48.8 H47.5 V51.5 H37.8 Z" fill="url(#dy)" stroke="#000" stroke-width="1"/>
<path d="M37.8 48 V56.3 H47.8" fill="none" stroke="#000" stroke-width="1"/>
<path d="M37.8 56.3 L41 51.3 H52.8 L48.5 56.3 Z" fill="#808000" stroke="#000" stroke-width="1"/>
<path d="M38.6 48.6 L41.2 51 L38.6 55 Z" fill="url(#dy)"/>
<path d="M45.5 45.5 Q48.5 43 51 46.5" fill="none" stroke="#000" stroke-width="1.1"/>
<path d="M52.6 44.8 V48.3 H49.2 Z" fill="#000"/>
<!-- Save -->
<path d="M61.6 44.6 H73.2 L74.8 46.2 V57 H61.6 Z" fill="#808000" stroke="#000" stroke-width="1.2"/>
<rect x="64.3" y="45" width="7.6" height="5.8" fill="#c0c0c0" stroke="#000" stroke-width="0.6"/>
<rect x="63.8" y="52.2" width="9.2" height="4.8" fill="#000"/>
<rect x="70" y="53.6" width="1.8" height="3" fill="#fff"/>
<rect x="73" y="45.4" width="1" height="1" fill="#fff"/>
<!-- Mail -->
<path d="M86 48.5 L91.5 43.6 L98.8 48 V55.5 H86 Z" fill="#fff" stroke="#000" stroke-width="1"/>
<path d="M87.3 48.8 L91.5 45 L97.6 48.6 V53 H87.3 Z" fill="#fff" stroke="#808080" stroke-width="0.7"/>
<rect x="90" y="49.3" width="5.5" height="1.1" fill="#000080"/>
<rect x="95.4" y="47.8" width="1.8" height="1.8" fill="#c00000"/>
<rect x="83.3" y="52.6" width="11.7" height="5.4" fill="#fff" stroke="#000" stroke-width="1.1"/>
<path d="M84.8 54.4 H86.8 M84.8 56.3 H86.8 M88.3 54.4 H93.5 M88.3 56.3 H93.5" stroke="#404040" stroke-width="1"/>
<!-- Print -->
<path d="M115.5 48.6 L117.5 44.3 H126 L124 48.6 Z" fill="#fff" stroke="#000" stroke-width="1"/>
<path d="M118 46 H124 M117.5 47.4 H123.3" stroke="#808080" stroke-width="0.7"/>
<path d="M112.6 51 L115 48.6 H126.5 L127.8 50 V54.8 L125.4 57.2 H112.6 Z" fill="#c0c0c0" stroke="#000" stroke-width="1.1"/>
<path d="M112.6 51 H125.4 V57.2 M125.4 51 L127.6 49.4" fill="none" stroke="#000" stroke-width="1"/>
<path d="M113.2 54.6 H125" stroke="#000" stroke-width="1.6"/>
<rect x="119" y="53.4" width="3.6" height="1.2" fill="#ffff00"/>
<path d="M114 52.2 H124.6" stroke="#fff" stroke-width="0.8"/>
<!-- Preview -->
<path d="M135.8 44.3 H142.6 L145.6 47.3 V57 H135.8 Z" fill="#fff" stroke="#000" stroke-width="1.2"/>
<path d="M142.4 44.3 V47.5 H145.6" fill="none" stroke="#000" stroke-width="0.9"/>
<circle cx="145" cy="52" r="3.4" fill="#c8f0f0" stroke="#000" stroke-width="1.3"/>
<circle cx="144.8" cy="51.8" r="1.7" fill="#30e0e0"/>
<path d="M147.5 54.6 L150.4 57.4" stroke="#000" stroke-width="2.2" stroke-linecap="round"/>
<!-- Spell -->
<text x="158.6" y="48.6" font-size="5.6" font-weight="bold" fill="#000" textLength="11.5" lengthAdjust="spacingAndGlyphs">АБВ</text>
<path d="M159.6 53.2 L163.3 56.8 L172.6 46.8" fill="none" stroke="#000080" stroke-width="2"/>
<!-- Cut -->
<path d="M191.8 44.3 L195.8 53 M198 44.3 L194 53" stroke="#000" stroke-width="1.3" fill="none"/>
<ellipse cx="192.3" cy="54.8" rx="1.7" ry="2.4" fill="none" stroke="#0000a0" stroke-width="1.2" transform="rotate(20 192.3 54.8)"/>
<ellipse cx="197.4" cy="54.8" rx="1.7" ry="2.4" fill="none" stroke="#0000a0" stroke-width="1.2" transform="rotate(-20 197.4 54.8)"/>
<!-- Copy -->
<path d="M210.6 44.7 H215 L217.4 47 V53.5 H210.6 Z" fill="#fff" stroke="#000" stroke-width="1.2"/>
<path d="M212 47 H214.5 M212 49 H215.5 M212 51 H215.5" stroke="#000" stroke-width="0.9"/>
<path d="M216.6 47.6 H221.8 L224.6 50.3 V56.6 H216.6 Z" fill="#fff" stroke="#000080" stroke-width="1.3"/>
<path d="M218.3 51 H221 M218.3 52.8 H223 M218.3 54.6 H223" stroke="#000" stroke-width="0.9"/>
<!-- Paste -->
<rect x="233.5" y="46" width="12.8" height="11" rx="1" fill="url(#do)" stroke="#000" stroke-width="1.2"/>
<path d="M237 46.6 L238.3 44.6 H241.6 L243 46.6 Z" fill="#e0e080" stroke="#000" stroke-width="0.9"/>
<path d="M236.4 47.4 H243.6" stroke="#ffff80" stroke-width="1"/>
<path d="M239.6 50.8 H246 L248.6 53 V57.2 H239.6 Z" fill="#fff" stroke="#000080" stroke-width="1.3"/>
<path d="M241.3 53.2 H244.5 M241.3 55.2 H247" stroke="#000080" stroke-width="1"/>
<!-- Format painter -->
<path d="M267.2 46.8 L270.4 43.8 L271.8 45.2 L268.8 48.3 Z" fill="#000080" stroke="#000" stroke-width="0.8"/>
<path d="M259.5 49 L265.2 45.2 L269.8 49.8 L265.4 55.4 Z" fill="#ffff60" stroke="#000" stroke-width="0.9"/>
<path d="M261.2 48 L266.8 53.8 M263.2 46.6 L268.4 52" stroke="#fff" stroke-width="0.9"/>
<path d="M257 49.4 L259.5 49 L265.4 55.4 L264.4 57.2 Z" fill="#c0c0c0" stroke="#000" stroke-width="0.8"/>
<path d="M256 57.6 H261.5" stroke="#ffff00" stroke-width="1" stroke-dasharray="1.3 0.8"/>
<!-- Undo -->
<path d="M286.8 48 V52.8 H291.8 Z" fill="#000080"/>
<path d="M289.5 50.5 Q293 45.8 296.6 47.6 Q299.6 50 297.3 54" fill="none" stroke="#000080" stroke-width="1.5"/>
<path d="M307 50 H312.6 L309.8 52.8 Z" fill="#000"/>
<!-- Redo (disabled) -->
<g transform="translate(1,1)"><path d="M333 48 V52.8 H328 Z" fill="#fff"/><path d="M330.4 50.5 Q327 45.8 323.3 47.6 Q320.3 50 322.6 54" fill="none" stroke="#fff" stroke-width="1.5"/></g>
<path d="M333 48 V52.8 H328 Z" fill="#a0a0a0"/><path d="M330.4 50.5 Q327 45.8 323.3 47.6 Q320.3 50 322.6 54" fill="none" stroke="#a0a0a0" stroke-width="1.5"/>
<path d="M342 51 H347.6 L344.8 53.8 Z" fill="#fff"/>
<path d="M341 50 H346.6 L343.8 52.8 Z" fill="#909090"/>
<!-- Globe / hyperlink -->
<circle cx="365" cy="48.8" r="5.6" fill="#0000e0" stroke="#000" stroke-width="1"/>
<path d="M362.5 44.6 Q366 43.6 368.8 46 Q370.6 49 369 52.4 Q366.5 52.8 365.4 50.6 Q363.4 49.6 364.2 47.2 Z" fill="#008000"/>
<path d="M361 46 Q362 44.6 363.4 45" stroke="#80ffff" stroke-width="1" fill="none"/>
<rect x="362.6" y="52.6" width="6" height="4.4" rx="2.2" fill="#fff" stroke="#000" stroke-width="1.2"/>
<rect x="368" y="52.6" width="6" height="4.4" rx="2.2" fill="#fff" stroke="#000" stroke-width="1.2"/>
<path d="M365.4 54.8 H371.4" stroke="#000" stroke-width="1.3"/>
<!-- Sigma -->
<path d="M393.4 48.2 V46.6 H386 L390 50.6 L385.8 54.4 H393.6 V52.6" fill="none" stroke="#000" stroke-width="1.2"/>
<!-- fx -->
<text x="406" y="55" font-family="Liberation Serif, serif" font-style="italic" font-weight="bold" font-size="14" fill="#000">f</text>
<text x="411.6" y="54" font-family="Liberation Serif, serif" font-style="italic" font-weight="bold" font-size="9.4" fill="#000" textLength="7" lengthAdjust="spacingAndGlyphs">x</text>
<!-- Sort asc -->
<text x="428.6" y="50" font-family="Liberation Serif, serif" font-weight="bold" font-size="9.6" fill="#0000a0">А</text>
<text x="428.8" y="57.6" font-family="Liberation Serif, serif" font-weight="bold" font-size="9.6" fill="#800000">Я</text>
<path d="M440.5 43.4 V55" stroke="#000" stroke-width="1.2"/><path d="M438 54 H443 L440.5 58 Z" fill="#000"/>
<!-- Sort desc -->
<text x="451.8" y="50" font-family="Liberation Serif, serif" font-weight="bold" font-size="9.6" fill="#800000">Я</text>
<text x="451.6" y="57.6" font-family="Liberation Serif, serif" font-weight="bold" font-size="9.6" fill="#0000a0">А</text>
<path d="M463.6 43.4 V55" stroke="#000" stroke-width="1.2"/><path d="M461.1 54 H466.1 L463.6 58 Z" fill="#000"/>
<!-- Chart -->
<path d="M481 45 V57.6 H495" fill="none" stroke="#000" stroke-width="1.5"/>
<path d="M482.4 44 V56.4 H495.6" fill="none" stroke="#fff" stroke-width="0.8"/>
<rect x="482.8" y="50" width="3.2" height="6" fill="#0000e0" stroke="#000" stroke-width="0.8"/>
<rect x="486.8" y="45" width="3.4" height="11" fill="#ffff00" stroke="#000" stroke-width="0.8"/>
<rect x="491" y="47" width="3.2" height="9" fill="#e00000" stroke="#000" stroke-width="0.8"/>
<!-- Drawing -->
<path d="M508 46 L510.5 43.6 H516.6 V50 L514.2 52.4 H508 Z" fill="#ffff00" stroke="#000" stroke-width="0.9"/>
<path d="M508 46 H514.2 V52.4 M514.2 46 L516.6 43.6" fill="none" stroke="#000" stroke-width="0.8"/>
<rect x="514.4" y="46.4" width="2" height="5" fill="#808000"/>
<text x="503" y="55.6" font-family="Liberation Serif, serif" font-weight="bold" font-style="italic" font-size="11" fill="#0000a0">A</text>
<path d="M510.5 55 L515.5 50.4 L519 53 L514 57.8 Z" fill="#c0c0c0" stroke="#000" stroke-width="0.8"/>
<ellipse cx="512.4" cy="56" rx="2.2" ry="2.4" fill="#00e0e0" stroke="#008080" stroke-width="0.6"/>
<!-- Help -->
<path d="M588.8 45.2 H600.6 V56.4 H599 L598.4 59 L595.6 56.4 H588.8 Z" fill="#000"/>
<path d="M587.6 44 H599.4 V55 H597.8 L597.6 57.8 L594.6 55 H587.6 Z" fill="url(#dh)" stroke="#000" stroke-width="1"/>
<text x="590.3" y="53.6" font-weight="bold" font-size="11.5" fill="#000080">?</text>
<path d="M608 54.2 H613.4 L610.7 57 Z" fill="#000"/>
<!-- ===== Toolbar 2 ===== -->
<text x="191.6" y="81" font-family="Liberation Serif, serif" font-weight="bold" font-size="13.4" fill="#000" textLength="10.6" lengthAdjust="spacingAndGlyphs">Ж</text>
<text x="213.4" y="81" font-family="Liberation Serif, serif" font-weight="bold" font-style="italic" font-size="13.4" fill="#000" textLength="12" lengthAdjust="spacingAndGlyphs">К</text>
<text x="238.2" y="81" font-family="Liberation Serif, serif" font-weight="bold" font-size="13.4" fill="#000" textLength="9" lengthAdjust="spacingAndGlyphs">Ч</text>
<rect x="238.2" y="82" width="9" height="1.2" fill="#000"/>
<!-- align left -->
<path d="M264 71.5 H278 M264 73.5 H273.8 M264 75.5 H278 M264 77.5 H273.8 M264 79.5 H278 M264 81.5 H273.8" stroke="#000" stroke-width="1.1"/>
<path d="M287 71.5 H301 M289.2 73.5 H298.6 M287 75.5 H301 M289.2 77.5 H298.6 M287 79.5 H301 M289.2 81.5 H298.6" stroke="#000" stroke-width="1.1"/>
<path d="M310 71.5 H324 M314.4 73.5 H324 M310 75.5 H324 M314.4 77.5 H324 M310 79.5 H324 M314.4 81.5 H324" stroke="#000" stroke-width="1.1"/>
<!-- merge -->
<rect x="333" y="69" width="16" height="15" fill="#000"/>
<rect x="334.2" y="70.2" width="6.4" height="1.7" fill="#fff"/><rect x="341.8" y="70.2" width="6" height="1.7" fill="#fff"/>
<rect x="334.2" y="73" width="13.6" height="7.2" fill="#fff"/>
<rect x="334.2" y="81.3" width="6.4" height="1.6" fill="#fff"/><rect x="341.8" y="81.3" width="6" height="1.6" fill="#fff"/>
<text x="338.9" y="79" font-size="7.8" font-weight="bold" fill="#000">a</text>
<path d="M334.4 76.6 H338 M344.2 76.6 H347.8" stroke="#000" stroke-width="1.1"/>
<path d="M335.8 75 V78.2 M346.2 75 V78.2" stroke="#000" stroke-width="1"/>
<!-- currency -->
<rect x="362.8" y="70.6" width="13.6" height="6.8" fill="#c0c0c0" stroke="#008000" stroke-width="1.6"/>
<ellipse cx="369.4" cy="74" rx="3.6" ry="2.1" fill="#e8e8e8" stroke="#606060" stroke-width="0.7"/>
<ellipse cx="369.6" cy="74" rx="1.5" ry="1" fill="#606060"/>
<path d="M362.4 78.4 H376.8" stroke="#000" stroke-width="1"/>
<rect x="370.6" y="74.8" width="3.6" height="5.6" fill="#e0e000" stroke="#303000" stroke-width="0.8"/>
<path d="M370.6 76.6 H374.2 M370.6 78.4 H374.2" stroke="#fff" stroke-width="0.6"/>
<ellipse cx="366" cy="80.6" rx="2.2" ry="1.1" fill="#ffff00" stroke="#303000" stroke-width="0.7"/>
<ellipse cx="371.6" cy="81.8" rx="2.2" ry="1.1" fill="#ffff00" stroke="#303000" stroke-width="0.7"/>
<!-- percent -->
<text x="386.4" y="82" font-weight="bold" font-size="14.2" fill="#000" textLength="14" lengthAdjust="spacingAndGlyphs">%</text>
<!-- 000 -->
<text x="408.6" y="82" font-size="12.6" fill="#000" textLength="14.6" lengthAdjust="spacingAndGlyphs">000</text>
<!-- inc decimal -->
<path d="M431.8 72.8 L434.2 70.6 V75 Z" fill="#000080"/><path d="M433.6 72.8 H437" stroke="#000080" stroke-width="1.2"/>
<text x="438.6" y="76" font-size="7.8" font-weight="bold" fill="#000" textLength="7.4" lengthAdjust="spacingAndGlyphs">,0</text>
<text x="434" y="83" font-size="7.8" font-weight="bold" fill="#000" textLength="12" lengthAdjust="spacingAndGlyphs">,00</text>
<!-- dec decimal -->
<text x="456.6" y="76" font-size="7.8" font-weight="bold" fill="#000" textLength="12.2" lengthAdjust="spacingAndGlyphs">,00</text>
<path d="M459.2 80.6 L456.8 78.4 V82.8 Z" fill="#000080"/><path d="M454 80.6 H457.4" stroke="#000080" stroke-width="1.2"/>
<text x="461.8" y="83" font-size="7.8" font-weight="bold" fill="#000" textLength="7.4" lengthAdjust="spacingAndGlyphs">,0</text>
<!-- outdent -->
<path d="M485.4 71.5 H498.8 M485.4 79.5 H498.8 M485.4 81.5 H489.6" stroke="#000" stroke-width="1.1"/>
<path d="M491.4 74 H498.8 M491.4 76.6 H496.6" stroke="#000" stroke-width="1.7"/>
<path d="M490.5 69.6 V84" stroke="#000" stroke-width="0.7" stroke-dasharray="1 1.6"/>
<path d="M482.8 75.6 L485.4 73.2 V78 Z" fill="#000080"/><path d="M485 75.6 H488" stroke="#000080" stroke-width="1.3"/>
<!-- indent -->
<path d="M508.4 71.5 H521.8 M508.4 79.5 H521.8 M508.4 81.5 H512.6" stroke="#000" stroke-width="1.1"/>
<path d="M514.4 74 H521.8 M514.4 76.6 H519.6" stroke="#000" stroke-width="1.7"/>
<path d="M513.5 69.6 V84" stroke="#000" stroke-width="0.7" stroke-dasharray="1 1.6"/>
<path d="M510.8 75.6 L508.2 73.2 V78 Z" fill="#000080"/><path d="M505.6 75.6 H508.8" stroke="#000080" stroke-width="1.3"/>
<!-- borders -->
<rect x="538" y="71.8" width="11.2" height="11" fill="none" stroke="#000" stroke-width="2"/>
<path d="M543.6 73 V82 M539 77.3 H548.4" stroke="#808080" stroke-width="0.9" stroke-dasharray="1 1"/>
<path d="M557 76.4 H562.4 L559.7 79.1 Z" fill="#000"/>
<!-- fill -->
<path d="M572 75.4 L577.4 70.6 L582 75.2 L576.6 79.6 Z" fill="#fff" stroke="#000" stroke-width="1"/>
<path d="M574 76.6 L579.6 72.2 L582 75.2 L576.6 79.6 Z" fill="#a0a0a0"/>
<path d="M576 73.6 V69.8 Q577.4 68.4 578.8 69.8 V71.6" fill="none" stroke="#000080" stroke-width="1"/>
<path d="M581.4 73 Q584.4 73.6 583.6 78.6 Q582 77.4 581.6 75.2 Z" fill="#000080"/>
<rect x="568.8" y="80.8" width="16.4" height="3.8" fill="#ffff00"/>
<path d="M591 76.4 H596.4 L593.7 79.1 Z" fill="#000"/>
<!-- font color -->
<text x="602.6" y="79.4" font-family="Liberation Serif, serif" font-weight="bold" font-size="14.4" fill="#000080" textLength="13.6" lengthAdjust="spacingAndGlyphs">A</text>
<rect x="602.8" y="80.8" width="16.4" height="3.8" fill="#ff0000"/>
<path d="M624.8 76.4 H630.2 L627.5 79.1 Z" fill="#000"/>
<path d="M636.8 80.2 H642.2 L639.5 82.9 Z" fill="#000"/>
</svg>

</div></body></html>
